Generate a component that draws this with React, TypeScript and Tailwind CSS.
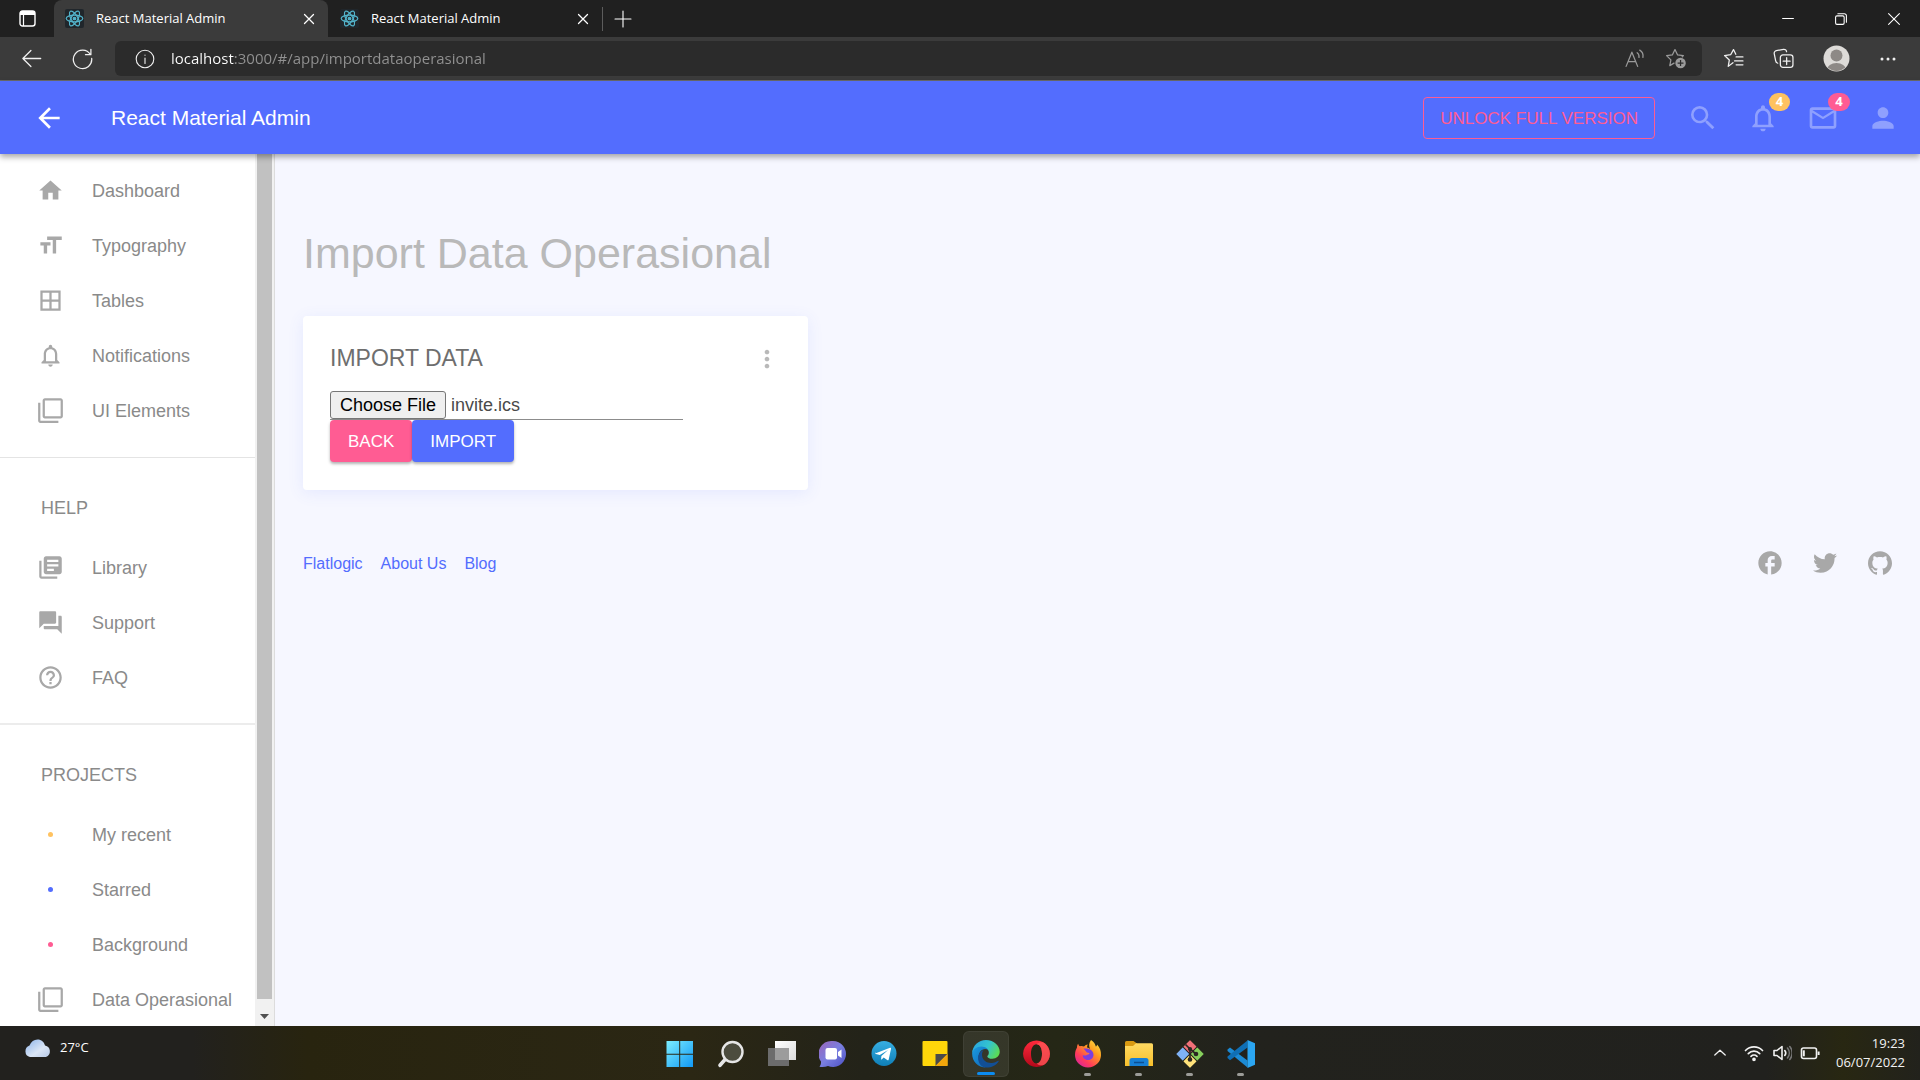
import { useEffect, useRef, type ReactNode } from "react";
import {
  MdArrowBack,
  MdBorderAll,
  MdFacebook,
  MdFilterNone,
  MdFormatSize,
  MdHelpOutline,
  MdHome,
  MdLibraryBooks,
  MdMailOutline,
  MdMoreVert,
  MdNotificationsNone,
  MdPerson,
  MdQuestionAnswer,
  MdSearch,
} from "react-icons/md";
import { SiGithub } from "react-icons/si";
import { FaTwitter } from "react-icons/fa";

/* ---------- Browser chrome ---------- */

function Line({ size, children, width = 1.2 }: { size: number; children: ReactNode; width?: number }) {
  return (
    <svg width={size} height={size} viewBox="0 0 20 20" fill="none" stroke="currentColor" strokeWidth={width} strokeLinecap="round" strokeLinejoin="round" aria-hidden="true">
      {children}
    </svg>
  );
}

function ReactLogo() {
  return (
    <svg width="19" height="19" viewBox="0 0 24 24" fill="none" stroke="#53b4cb" strokeWidth="1.5" className="shrink-0 rounded-xs bg-[#20262b]" aria-hidden="true">
      <ellipse cx="12" cy="12" rx="10.5" ry="4.2" />
      <ellipse cx="12" cy="12" rx="10.5" ry="4.2" transform="rotate(60 12 12)" />
      <ellipse cx="12" cy="12" rx="10.5" ry="4.2" transform="rotate(120 12 12)" />
      <circle cx="12" cy="12" r="1.6" fill="#53b4cb" />
    </svg>
  );
}

function CloseGlyph() {
  return (
    <Line size={18} width={1.4}>
      <path d="M5 5l10 10M15 5L5 15" />
    </Line>
  );
}

function BrowserTab({ active }: { active?: boolean }) {
  return (
    <div className={active ? "flex h-full w-[274px] items-center rounded-t-lg bg-[#3b3b3b] pr-2.5 pl-[11px]" : "flex h-full w-[274px] items-center pr-2.5 pl-3"}>
      <ReactLogo />
      <span className="ml-3 flex-1 text-[13px] text-white">React Material Admin</span>
      <button aria-label="Close tab" className="text-white">
        <CloseGlyph />
      </button>
    </div>
  );
}

function TabStrip() {
  return (
    <div className="flex h-[37px] items-center bg-[#202020] text-white">
      <button aria-label="Tab actions" className="flex w-[54px] justify-center">
        <svg width="17" height="17" viewBox="0 0 17 17" aria-hidden="true">
          <rect x="1" y="1" width="15" height="15" rx="2.5" fill="none" stroke="#fff" strokeWidth="1.4" />
          <path d="M1 3a2 2 0 0 1 2-2h11a2 2 0 0 1 2 2v2H1z" fill="#fff" />
          <path d="M4.500 5v11" stroke="#fff" strokeWidth="1.2" />
        </svg>
      </button>
      <BrowserTab active />
      <BrowserTab />
      <div className="h-6 w-px bg-[#5c5c5c]" />
      <button aria-label="New tab" className="ml-2.5">
        <Line size={20} width={1.1}>
          <path d="M10 2v16M2 10h16" />
        </Line>
      </button>
      <div className="ml-auto flex">
        <button aria-label="Minimize" className="flex w-[53px] justify-center">
          <Line size={18}><path d="M4 9.500h12" /></Line>
        </button>
        <button aria-label="Restore" className="flex w-[53px] justify-center">
          <Line size={18}>
            <rect x="4" y="6.500" width="9.500" height="9.500" rx="1.500" />
            <path d="M6.500 4.200h7.300a2.200 2.200 0 0 1 2.200 2.200v7.200" />
          </Line>
        </button>
        <button aria-label="Close window" className="flex w-[53px] justify-center">
          <Line size={18}><path d="M4 4l12 12M16 4L4 16" /></Line>
        </button>
      </div>
    </div>
  );
}

function AddressBar() {
  return (
    <div className="flex h-11 items-center border-b border-[#6a6a6a] bg-[#3b3b3b] text-[#f0f0f0]">
      <button aria-label="Back" className="ml-5">
        <Line size={23} width={1.1}><path d="M18 10H2.500M9.500 3L2.500 10l7 7" /></Line>
      </button>
      <button aria-label="Reload" className="ml-7">
        <Line size={23} width={1.1}>
          <path d="M16.800 6.500A8 8 0 1 0 18 10M17.300 2v4.700h-4.700" />
        </Line>
      </button>
      <div className="ml-[21px] flex h-[35px] flex-1 items-center rounded-md bg-[#2b2b2b] pr-4 pl-5">
        <Line size={20} width={1.1}>
          <circle cx="10" cy="10" r="8.800" />
          <path d="M10 9v5.500M10 6v.2" />
        </Line>
        <input
          aria-label="Address"
          defaultValue="localhost:3000/#/app/importdataoperasional"
          className="ml-4 min-w-0 flex-1 bg-[linear-gradient(90deg,#ffffff_64px,#929292_64px)] bg-clip-text text-[15px] text-transparent outline-none"
        />
        <button aria-label="Read aloud" className="text-[#9a9a9a]">
          <Line size={21} width={1.2}>
            <path d="M2 17.500L7.500 4l5.500 13.500M4 13h7M12.500 4.500c1.600 1 2 2.500 1.800 4.500M15 2c2.600 1.500 3.500 4 3 7" />
          </Line>
        </button>
        <button aria-label="Add to favorites" className="ml-5 text-[#9a9a9a]">
          <svg width="21" height="21" viewBox="0 0 20 20" fill="none" stroke="currentColor" strokeWidth="1.200" strokeLinejoin="round" aria-hidden="true">
            <path d="M9 14.200L4.600 16.800l1-5.500-4.100-4 5.500-.7L9.500 1.500 12 6.600l5.500.7-1.500 1.500" />
            <circle cx="14.800" cy="14.300" r="5" fill="currentColor" stroke="none" />
            <path d="M14.800 11.500v5.600M12 14.300h5.600" stroke="#2b2b2b" />
          </svg>
        </button>
      </div>
      <button aria-label="Favorites" className="ml-[21px]">
        <Line size={21}>
          <path d="M9.500 14L5 17.500l1-6-4.500-4.300 5.800-.8L10 1.500l2.200 4.500M12.500 8.500H19M11 12.300h8M12.500 16H19" />
        </Line>
      </button>
      <button aria-label="Collections" className="ml-[29px]">
        <Line size={21}>
          <path d="M4.500 14.500A3 3 0 0 1 2.500 12L1.200 5.500a2.500 2.500 0 0 1 2-3L10 1.300a2.500 2.500 0 0 1 2.900 2.200" />
          <rect x="7" y="6.500" width="12" height="12" rx="2.500" />
          <path d="M13 9.200v6.600M9.700 12.500h6.600" />
        </Line>
      </button>
      <button aria-label="Profile" className="ml-[29px]">
        <svg width="27" height="27" viewBox="0 0 27 27" aria-hidden="true">
          <defs>
            <clipPath id="avatar"><circle cx="13.500" cy="13.500" r="12.500" /></clipPath>
          </defs>
          <circle cx="13.500" cy="13.500" r="13" fill="#dddbd8" />
          <g clipPath="url(#avatar)" fill="#8d8986">
            <circle cx="13.500" cy="10.500" r="6" />
            <ellipse cx="13.500" cy="24.500" rx="9.500" ry="6.500" />
          </g>
        </svg>
      </button>
      <button aria-label="Settings and more" className="mr-[22px] ml-7">
        <svg width="20" height="20" viewBox="0 0 20 20" fill="currentColor" aria-hidden="true">
          <circle cx="4" cy="10" r="1.500" />
          <circle cx="10" cy="10" r="1.500" />
          <circle cx="16" cy="10" r="1.500" />
        </svg>
      </button>
    </div>
  );
}

/* ---------- Application ---------- */

function AppHeader() {
  return (
    <header className="relative z-10 flex h-[73px] items-center bg-[#536dfe] shadow-[0_3px_6px_rgba(0,0,0,0.35)]">
      <button aria-label="Collapse menu" className="ml-[33px] text-white">
        <MdArrowBack size={32} />
      </button>
      <h1 className="ml-[46px] flex-1 text-[21px] text-white">React Material Admin</h1>
      <button className="h-[42px] rounded-[4px] border border-[#ff5c93] px-4 pt-0.5 text-[17px] text-[#ff5c93]">UNLOCK FULL VERSION</button>
      <div className="mr-[21px] ml-8 flex items-center gap-7 text-white/35">
        <button aria-label="Search"><MdSearch size={32} /></button>
        <button aria-label="Notifications" className="relative">
          <MdNotificationsNone size={32} />
          <span className="absolute -top-[9px] left-[22px] flex h-[18px] w-[21px] items-center justify-center rounded-full bg-[#ffc260] font-['Noto_Sans',sans-serif] text-[13px] font-bold text-white">4</span>
        </button>
        <button aria-label="Messages" className="relative">
          <MdMailOutline size={32} />
          <span className="absolute -top-[9px] left-[21px] flex h-[18px] w-[22px] items-center justify-center rounded-full bg-[#ff5c93] font-['Noto_Sans',sans-serif] text-[13px] font-bold text-white">4</span>
        </button>
        <button aria-label="Account"><MdPerson size={32} /></button>
      </div>
    </header>
  );
}

function NavItem({ icon, children }: { icon: ReactNode; children: ReactNode }) {
  return (
    <li>
      <a href="#" className="flex h-[55px] items-center">
        <span className="ml-9 flex w-7 justify-center text-[#a8a8a8]">{icon}</span>
        <span className="ml-7 whitespace-nowrap">{children}</span>
      </a>
    </li>
  );
}

function NavSection({ title, children }: { title: string; children: ReactNode }) {
  return (
    <section>
      <h2 className="flex h-16 items-center pl-[41px]">{title}</h2>
      <ul>{children}</ul>
    </section>
  );
}

function Sidebar() {
  return (
    <aside className="flex w-[275px] shrink-0 overflow-hidden border-r border-[#dcdcdc] bg-white">
      <nav className="flex-1 pt-[9px] text-lg text-[#8a8a8a]">
        <ul>
          <NavItem icon={<MdHome size={27} />}>Dashboard</NavItem>
          <NavItem icon={<MdFormatSize size={27} />}>Typography</NavItem>
          <NavItem icon={<MdBorderAll size={27} />}>Tables</NavItem>
          <NavItem icon={<MdNotificationsNone size={27} />}>Notifications</NavItem>
          <NavItem icon={<MdFilterNone size={27} />}>UI Elements</NavItem>
        </ul>
        <hr className="mt-[19px] mb-[18px] border-[#e4e4e4]" />
        <NavSection title="HELP">
          <NavItem icon={<MdLibraryBooks size={27} />}>Library</NavItem>
          <NavItem icon={<MdQuestionAnswer size={27} />}>Support</NavItem>
          <NavItem icon={<MdHelpOutline size={27} />}>FAQ</NavItem>
        </NavSection>
        <hr className="my-[18px] border-t-2 border-[#ececec]" />
        <NavSection title="PROJECTS">
          <NavItem icon={<span className="size-[5px] rounded-full bg-[#ffc260]" />}>My recent</NavItem>
          <NavItem icon={<span className="size-[5px] rounded-full bg-[#536dfe]" />}>Starred</NavItem>
          <NavItem icon={<span className="size-[5px] rounded-full bg-[#ff5c93]" />}>Background</NavItem>
          <NavItem icon={<MdFilterNone size={27} />}>Data Operasional</NavItem>
        </NavSection>
      </nav>
      <div className="flex w-[19px] flex-col items-center bg-[#f1f1f1]" aria-hidden="true">
        <div className="w-[15px] flex-1 bg-[#c1c1c1]" />
        <svg width="19" height="27" viewBox="0 0 19 27">
          <path d="M5 15h9l-4.500 5z" fill="#505050" />
        </svg>
      </div>
    </aside>
  );
}

function ImportCard() {
  const fileInput = useRef<HTMLInputElement>(null);

  useEffect(() => {
    if (!fileInput.current) return;
    const transfer = new DataTransfer();
    transfer.items.add(new File([""], "invite.ics", { type: "text/calendar" }));
    fileInput.current.files = transfer.files;
  }, []);

  return (
    <section className="w-[505px] max-w-full rounded-[4px] bg-white px-[27px] pt-[27px] pb-7 shadow-[0_3px_16px_rgba(83,109,254,0.1)]">
      <div className="flex h-[30px] items-center justify-between">
        <h3 className="text-[23px] text-[#6e6e6e]">IMPORT DATA</h3>
        <button aria-label="More" className="pt-0.5 text-[#b9b9b9]"><MdMoreVert size={28} /></button>
      </div>
      <input
        ref={fileInput}
        type="file"
        aria-label="Data file"
        className="mt-[18px] block h-[29px] w-[353px] max-w-full border-b border-[#8c8c8c] text-lg leading-7 text-[#4a4a4a] file:mr-[5px] file:h-7 file:rounded-[3px] file:border file:border-solid file:border-[#767676] file:bg-[#efefef] file:px-[9px] file:leading-6 file:text-black"
      />
      <div className="flex">
        <button className="h-[42px] rounded-[4px] bg-[#ff5c93] px-[18px] pt-0.5 text-[17px] text-white shadow-[0_2px_3px_rgba(0,0,0,0.3)]">BACK</button>
        <button className="h-[42px] rounded-[4px] bg-[#536dfe] px-[18px] pt-0.5 text-[17px] text-white shadow-[0_2px_3px_rgba(0,0,0,0.3)]">IMPORT</button>
      </div>
    </section>
  );
}

function PageFooter() {
  return (
    <footer className="-mr-0.5 mt-[59px] flex items-center justify-between">
      <div className="flex gap-[18px] pt-0.5 text-base text-[#536dfe]">
        <a href="#">Flatlogic</a>
        <a href="#">About Us</a>
        <a href="#">Blog</a>
      </div>
      <div className="flex items-center gap-[27px] text-[#a8a8a8]">
        <a href="#" aria-label="Facebook" className="flex w-7 justify-center"><MdFacebook size={28} /></a>
        <a href="#" aria-label="Twitter" className="flex w-7 justify-center"><FaTwitter size={24} /></a>
        <a href="#" aria-label="GitHub" className="flex w-7 justify-center"><SiGithub size={24} /></a>
      </div>
    </footer>
  );
}

/* ---------- Taskbar ---------- */

function Glyph({ children }: { children: ReactNode }) {
  return <svg width="28" height="28" viewBox="0 0 28 28" aria-hidden="true">{children}</svg>;
}

function Gradients() {
  return (
    <svg width="0" height="0" className="absolute" aria-hidden="true">
      <defs>
        <linearGradient id="win" x1="0" y1="0" x2="28" y2="28" gradientUnits="userSpaceOnUse"><stop stopColor="#7ff0ff" /><stop offset="1" stopColor="#0d95f5" /></linearGradient>
        <linearGradient id="chat" x1="0" y1="0" x2="1" y2="1"><stop stopColor="#9b64b8" /><stop offset=".5" stopColor="#7a7fe0" /><stop offset="1" stopColor="#4b4fc4" /></linearGradient>
        <linearGradient id="tele" x1="0" y1="0" x2="0" y2="1"><stop stopColor="#37aee2" /><stop offset="1" stopColor="#0f7fb8" /></linearGradient>
        <linearGradient id="edgeTop" x1="0" y1=".3" x2="1" y2=".7"><stop stopColor="#2aa5e0" /><stop offset=".5" stopColor="#33c4cf" /><stop offset="1" stopColor="#5fdc4a" /></linearGradient>
        <linearGradient id="edgeBody" x1="0" y1="0" x2="1" y2="1"><stop stopColor="#1b9de2" /><stop offset="1" stopColor="#0f62b4" /></linearGradient>
        <linearGradient id="opera" x1="0" y1="0" x2="0" y2="1"><stop stopColor="#ff2a3c" /><stop offset="1" stopColor="#b3081a" /></linearGradient>
        <linearGradient id="fox" x1="1" y1="0" x2=".2" y2="1"><stop stopColor="#fff04a" /><stop offset=".4" stopColor="#ff9a1f" /><stop offset=".75" stopColor="#ff3b5b" /><stop offset="1" stopColor="#d8259b" /></linearGradient>
        <linearGradient id="folder" x1="0" y1="0" x2="0" y2="1"><stop stopColor="#ffda62" /><stop offset="1" stopColor="#f7bf2b" /></linearGradient>
        <linearGradient id="cloud" x1="0" y1="0" x2="1" y2="1"><stop stopColor="#8db4ea" /><stop offset=".6" stopColor="#dbe6f6" /><stop offset="1" stopColor="#b7c9e6" /></linearGradient>
        <linearGradient id="pane" x1="0" y1="0" x2="1" y2="1"><stop stopColor="#fff" /><stop offset="1" stopColor="#dcdcdc" /></linearGradient>
      </defs>
    </svg>
  );
}

const taskbarApps: { name: string; running?: boolean; active?: boolean; icon: ReactNode }[] = [
  {
    name: "Start",
    icon: <path fill="url(#win)" d="M.5 1h12.700v12.700H.5zM14.200 1H27v12.700H14.200zM.5 14.700h12.700V27H.5zM14.200 14.700H27V27H14.200z" />,
  },
  {
    name: "Search",
    icon: (
      <>
        <path d="M8.500 19L3 25.300" stroke="#e6e6e6" strokeWidth="3.600" strokeLinecap="round" />
        <circle cx="15.500" cy="12" r="10" fill="#4c4c3e" stroke="#e6e6e6" strokeWidth="2.400" />
      </>
    ),
  },
  {
    name: "Task view",
    icon: (
      <>
        <path d="M7 1h21v19H7z" fill="url(#pane)" />
        <path d="M0 8h21v18H0z" fill="#6c6c6c" />
        <path d="M7 8h14v12H7z" fill="#9c9c9c" />
      </>
    ),
  },
  {
    name: "Chat",
    icon: (
      <>
        <path d="M14 1a13 13 0 1 1-5 25c-2.400 1-5.500 1.300-8.500.8 1-1.500 1.700-3.400 1.500-5.300A13 13 0 0 1 14 1z" fill="url(#chat)" />
        <rect x="6.500" y="8" width="11.500" height="11.500" rx="2" fill="#fff" />
        <path d="M19 12l3.500-2.500v8.500L19 15.500z" fill="#fff" />
      </>
    ),
  },
  {
    name: "Telegram",
    icon: (
      <>
        <circle cx="14" cy="13.500" r="12.500" fill="url(#tele)" />
        <path d="M5.800 13.300L20 7.800c.7-.2 1.200.2 1 1.100L18.700 19.500c-.2.900-.8 1-1.500.6l-3.500-2.600-1.800 1.700c-.2.200-.4.400-.8.400l.3-3.700 6.700-6-8.300 5.200-3.900-1.100c-.8-.3-.8-.9-.1-1.700z" fill="#fff" />
      </>
    ),
  },
  {
    name: "Sticky Notes",
    icon: (
      <>
        <rect x="1.500" y="1" width="25" height="25" rx="1" fill="#ffd60a" />
        <path d="M14.500 14H26.500L14.500 26z" fill="#4a4a4a" />
        <path d="M26.500 14v12H14.500z" fill="#f2a60c" />
      </>
    ),
  },
  {
    name: "Microsoft Edge",
    active: true,
    icon: (
      <g transform="scale(1.38) translate(-1.900 -2)">
        <path d="M12 22C6.300 22 2 17.600 2 12c0-3.800 3.100-6.200 6.500-6.200 3.400 0 5.900 2.300 5.900 5 0-1.500-1.400-2.300-2.900-2.300-3 0-5.100 3-4.800 6.800.3 3.500 2.800 6 5.300 6.700z" fill="url(#edgeBody)" />
        <path d="M9.200 13.200c.3 3.800 3.700 5.600 7 5.400 1.900-.1 3.500-.9 4.400-1.400.5-.3.800.1.500.5C19.300 20.400 16 22 12.600 22 8.500 21.800 6 18.500 6.400 14.300c.2-2.300 1.800-4.500 4-5.100-1 .9-1.300 2.400-1.200 4z" fill="#124f96" />
        <path d="M2 12C2 6 6.800 2 12 2c6 0 10 4.200 10 8.600 0 3-2.400 5-5.300 5-2.400 0-3.700-.9-3.700-1.700 0-.6 1.100-1 1.100-2.700 0-2.400-2.200-4.400-5.400-4.400C5.200 6.800 2.500 9 2 12z" fill="url(#edgeTop)" />
      </g>
    ),
  },
  {
    name: "Opera",
    icon: (
      <>
        <path fillRule="evenodd" d="M13.500.5a13.500 13.200 0 1 0 .1 0zM13.500 4.200c3.300 0 5.500 4 5.500 9.600s-2.200 9.600-5.500 9.600S8 19.400 8 13.800s2.200-9.600 5.500-9.600z" fill="url(#opera)" />
        <path d="M13.500 4.200c3-2.500 6.500-2.600 9-.2a13.300 13.300 0 0 1 0 19.700c-2.500 2.300-6.200 2.100-9-.3 3.300 0 5.500-4 5.500-9.600s-2.200-9.600-5.500-9.600z" fill="#ff5a5a" opacity=".75" />
      </>
    ),
  },
  {
    name: "Firefox",
    running: true,
    icon: (
      <>
        <path d="M17 0c3 2 4.200 4 4.800 6.500 1-.3 1.300-1.500 1.300-2 3 3.300 4 6.700 3.900 10.500A13 12.500 0 0 1 1 15c0-3.500 1-5.800 2-7.500 0-1.500.3-3 1.200-3.800.3 1.300 1 2.200 1.800 2.600 1.600-.4 3-.1 4 .3 1.200-1.400 2.400-1.800 3.800-2-.6 1-.8 2-.7 2.900 1.300.2 2 .8 3 1.500C14.500 6 14.900 2.800 17 0z" fill="url(#fox)" />
        <path d="M9.500 8.500c4-.6 10.500 1 10 6.800-.3 3.200-2.800 4.700-5.500 4.700-3.200 0-5.500-2.400-5.200-5 1 .7 2.500.8 3.600.2 1.200-.6 2.300-.6 3-1.100.3-1.300-2.200-1.100-3.200-2.300-.7-1-1.600-2.200-2.700-3.300z" fill="#7b3fe0" />
      </>
    ),
  },
  {
    name: "File Explorer",
    running: true,
    icon: (
      <>
        <path d="M0 2.500A1.500 1.500 0 0 1 1.500 1h7L12 3.500V7H0z" fill="#d99a12" />
        <path d="M0 6h8l3-2.700h15.500A1.500 1.500 0 0 1 28 4.800V26H0z" fill="url(#folder)" />
        <path d="M4.500 26v-5.500A2.500 2.500 0 0 1 7 18h14a2.500 2.500 0 0 1 2.500 2.500V26z" fill="#1780d6" />
        <path d="M9 22.500h10" stroke="#0b4f93" strokeWidth="1.500" />
      </>
    ),
  },
  {
    name: "Git",
    running: true,
    icon: (
      <>
        <g transform="rotate(45 14 14)">
          <rect x="4.200" y="4.200" width="9.300" height="9.300" rx=".5" fill="#f07078" />
          <rect x="14.500" y="4.200" width="9.300" height="9.300" rx=".5" fill="#86cf5c" />
          <rect x="4.200" y="14.500" width="9.300" height="9.300" rx=".5" fill="#7fb2f5" />
          <rect x="14.500" y="14.500" width="9.300" height="9.300" rx=".5" fill="#ffe27a" />
        </g>
        <path d="M9.500 4.500L14 9v10.500M14 9l6 5" fill="none" stroke="#2a2622" strokeWidth="1.700" />
        <circle cx="14" cy="9" r="2.100" fill="#2a2622" />
        <circle cx="20" cy="14" r="2.300" fill="#2a2622" />
        <circle cx="14" cy="19.500" r="2.300" fill="#2a2622" />
      </>
    ),
  },
  {
    name: "Visual Studio Code",
    running: true,
    icon: (
      <>
        <path d="M.5 9.500L3 7.500 20.500 20.500V27.500L.5 11z" fill="#1c8ad4" />
        <path d="M.5 18L3 20.300 20.500 7.500V.5L.5 16.500z" fill="#0f6fb5" />
        <path d="M20.500 0L28 3.300v21.400L20.500 28z" fill="#2ba6f2" />
      </>
    ),
  },
];

function Taskbar() {
  return (
    <footer className="grid h-[54px] shrink-0 grid-cols-[1fr_auto_1fr] bg-[linear-gradient(90deg,#22211e_0%,#22211e_10%,#28240f_16%,#2b2714_36%,#232319_45%,#252716_55%,#22221d_65%,#21211e_92%,#282712_96%,#22221c_100%)] font-['Open_Sans','Noto_Sans',sans-serif] text-[13px] text-white">
      <button aria-label="Weather, 27 degrees" className="flex h-11 items-center gap-2 justify-self-start pl-6">
        <svg width="28" height="19" viewBox="0 0 28 19" aria-hidden="true">
          <path d="M6 18a6 6 0 0 1-.5-11.500C7 2.500 10 .5 13.500.5c4 0 6.500 2.500 7.500 6A6 6 0 0 1 22 18z" fill="url(#cloud)" />
        </svg>
        <span>27°C</span>
      </button>
      <ul className="flex items-center gap-[5px] pt-0.5">
        {taskbarApps.map((app) => (
          <li key={app.name}>
            <button
              aria-label={app.name}
              className={app.active ? "relative flex size-[46px] items-center justify-center rounded-md border border-white/5 bg-white/8" : "relative flex size-[46px] items-center justify-center"}
            >
              <Glyph>{app.icon}</Glyph>
              {app.active && <span className="absolute bottom-px h-[3px] w-[18px] rounded-full bg-[#0c8cf0]" />}
              {app.running && <span className="absolute bottom-px h-[3px] w-[7px] rounded-full bg-[#9c9c98]" />}
            </button>
          </li>
        ))}
      </ul>
      <div className="flex items-center justify-self-end pr-[15px] text-[#f2f2f2]">
        <button aria-label="Show hidden icons" className="mr-4"><Line size={16} width={1.6}><path d="M3.500 12.500L10 6.500l6.500 6" /></Line></button>
        <button aria-label="Network, volume and battery" className="mr-4 flex items-center gap-2">
          <Line size={20} width={1.7}>
            <path d="M1.500 7.500a12 12 0 0 1 17 0M4.300 10.600a8 8 0 0 1 11.400 0M7 13.400a4.300 4.300 0 0 1 6 0" />
            <circle cx="10" cy="16.300" r="1" fill="currentColor" />
          </Line>
          <Line size={20} width={1.6}>
            <path d="M2 7.500h3L10 3.500v13l-5-4H2z" />
            <path d="M12.800 7.500a4 4 0 0 1 0 5" />
            <path d="M15.500 5a8 8 0 0 1 0 10M17.800 3.500a10 10 0 0 1 0 13" stroke="#777" />
          </Line>
          <svg width="20" height="20" viewBox="0 0 20 20" fill="none" stroke="currentColor" strokeWidth="1.600" aria-hidden="true">
            <rect x="1.500" y="5" width="15" height="10.500" rx="2" />
            <path d="M3.800 7.300v6" strokeWidth="2" />
            <path d="M18.600 8.500v3.500" strokeWidth="2" />
          </svg>
        </button>
        <button className="text-right leading-[19px]">
          <span className="block">19:23</span>
          <span className="block">06/07/2022</span>
        </button>
      </div>
    </footer>
  );
}

export default function App() {
  return (
    <div className="flex h-screen flex-col overflow-hidden font-['Liberation_Sans',Arial,sans-serif]">
      <Gradients />
      <div className="font-['Open_Sans','Noto_Sans',sans-serif]">
        <TabStrip />
        <AddressBar />
      </div>
      <AppHeader />
      <div className="flex min-h-0 flex-1">
        <Sidebar />
        <main className="min-w-0 flex-1 overflow-hidden bg-[#f6f7ff] px-7 pt-[73px]">
          <h2 className="mb-[37px] text-[43px] leading-[52px] text-[#b9b9b9]">Import Data Operasional</h2>
          <ImportCard />
          <PageFooter />
        </main>
      </div>
      <Taskbar />
    </div>
  );
}
